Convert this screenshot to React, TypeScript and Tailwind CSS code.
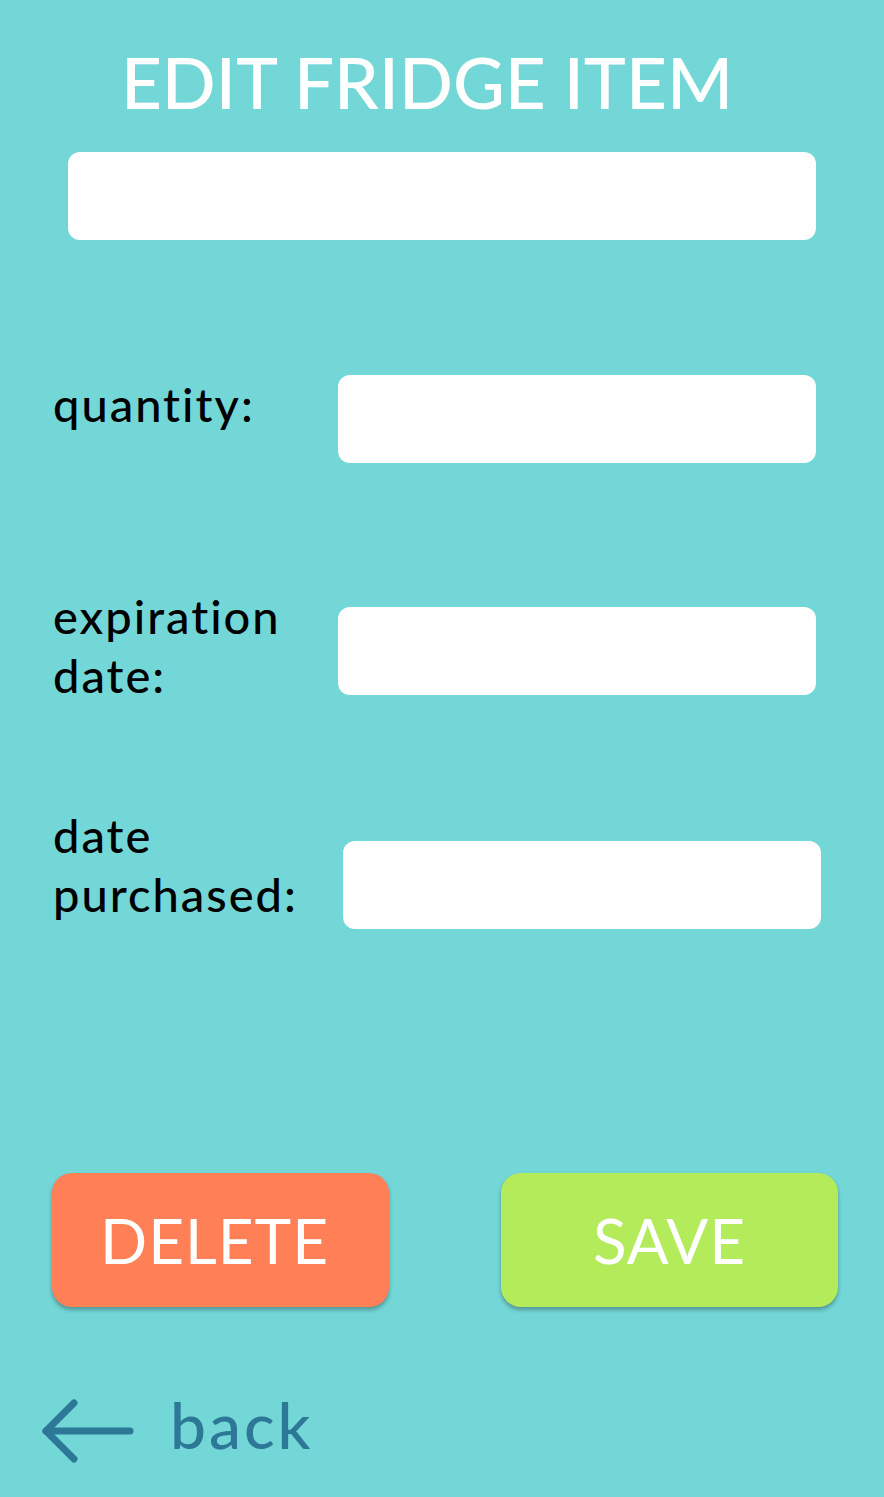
import React from 'react';

export default function App() {
  return (
    <div className="w-[884px] h-[1497px] bg-[#74d7d7] flex flex-col overflow-hidden font-['Lato','Noto_Sans',sans-serif]">
      {/* title */}
      <h1 className="shrink-0 mt-[42px] h-[80px] text-center text-white text-[71px] leading-[80px] font-medium pr-[30px]">
        EDIT FRIDGE ITEM
      </h1>

      {/* item name */}
      <input className="shrink-0 mt-[30px] ml-[68px] w-[748px] h-[88px] rounded-[12px] bg-white outline-none" />

      {/* quantity */}
      <div className="shrink-0 mt-[135px] h-[88px] flex items-start pl-[53px]">
        <span className="w-[285px] text-[47px] leading-[59px] tracking-[2px] font-medium text-black">quantity:</span>
        <input className="w-[478px] h-[88px] rounded-[12px] bg-white outline-none" />
      </div>

      {/* expiration date */}
      <div className="shrink-0 mt-[144px] h-[88px] flex items-start pl-[53px]">
        <span className="w-[285px] -mt-[20px] text-[47px] leading-[59px] tracking-[2px] font-medium text-black">
          expiration
          <br />
          date:
        </span>
        <input className="w-[478px] h-[88px] rounded-[12px] bg-white outline-none" />
      </div>

      {/* date purchased */}
      <div className="shrink-0 mt-[146px] h-[88px] flex items-start pl-[53px]">
        <span className="w-[290px] -mt-[35px] text-[47px] leading-[59px] tracking-[2px] font-medium text-black">
          date
          <br />
          purchased:
        </span>
        <input className="w-[478px] h-[88px] rounded-[12px] bg-white outline-none" />
      </div>

      {/* buttons */}
      <div className="shrink-0 mt-[244px] flex justify-between pl-[52px] pr-[46px]">
        <button className="w-[337px] h-[134px] rounded-[20px] bg-[#ff7f57] text-white text-[62px] tracking-[1px] shadow-[0_3px_4px_rgba(0,0,0,0.3)] pr-[12px]">
          DELETE
        </button>
        <button className="w-[337px] h-[134px] rounded-[20px] bg-[#b4eb5b] text-white text-[62px] tracking-[1px] shadow-[0_3px_4px_rgba(0,0,0,0.3)]">
          SAVE
        </button>
      </div>

      {/* back */}
      <div className="shrink-0 mt-[91px] h-[66px] flex items-center pl-[41px] gap-[36px] text-[#2e7897]">
        <svg width="93" height="66" viewBox="0 0 93 66" fill="none" stroke="#2e7897" strokeWidth="7" strokeLinecap="round" strokeLinejoin="round">
          <path d="M89 33H5" />
          <path d="M33 5L5 33L33 61" />
        </svg>
        <span className="-mt-[12px] text-[64px] leading-[70px] tracking-[3px] font-medium">back</span>
      </div>
    </div>
  );
}
